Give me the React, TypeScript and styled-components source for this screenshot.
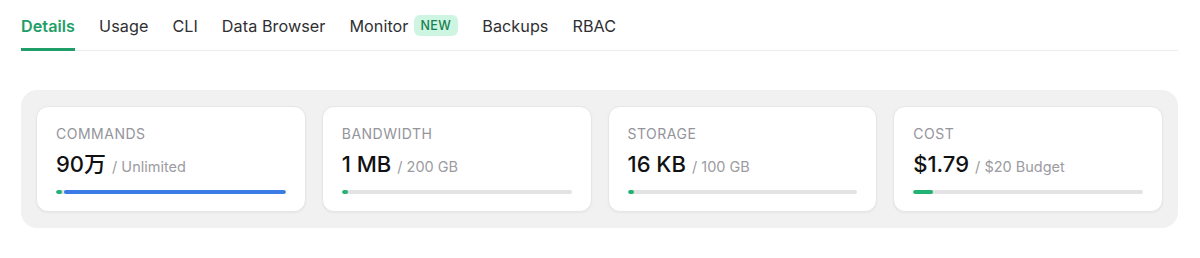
import React from "react"
import styled, { createGlobalStyle } from "styled-components"

const GlobalStyle = createGlobalStyle`
  html, body {
    margin: 0;
    padding: 0;
    background: #ffffff;
    font-family: Inter, "Noto Sans CJK SC", "Noto Sans", sans-serif;
    -webkit-font-smoothing: antialiased;
  }
`

const Page = styled.div`
  width: 1200px;
  height: 258px;
  box-sizing: border-box;
  padding: 0 22px 0 21px;
`

const TabBar = styled.nav`
  display: flex;
  align-items: flex-end;
  gap: 24px;
  border-bottom: 1px solid #ececec;
`

const Tab = styled.div<{ active?: boolean }>`
  display: flex;
  align-items: center;
  gap: 5px;
  height: 51px;
  box-sizing: border-box;
  padding-top: 3px;
  margin-bottom: -1px;
  border-bottom: 3px solid ${(p) => (p.active ? "#1f9e68" : "transparent")};
  font-size: 16.2px;
  line-height: 22px;
  letter-spacing: 0.05px;
  font-weight: ${(p) => (p.active ? 600 : 400)};
  color: ${(p) => (p.active ? "#1f9e68" : "#2f2f33")};
`

const Badge = styled.span`
  display: inline-flex;
  align-items: center;
  height: 21px;
  padding: 0 7px;
  border-radius: 6px;
  background: #cdf5e1;
  color: #1a7f52;
  font-size: 12.5px;
  font-weight: 500;
  letter-spacing: 0.4px;
`

const Panel = styled.section`
  margin-top: 39px;
  padding: 16px 15px;
  border-radius: 16px;
  background: #f1f1f1;
  display: grid;
  grid-template-columns: repeat(4, 1fr);
  gap: 16px;
`

const Card = styled.div`
  background: #ffffff;
  border-radius: 12px;
  border: 1px solid #e6e6e6;
  box-shadow: 0 1px 2px rgba(0, 0, 0, 0.05);
  padding: 17px 19px 17px;
  display: flex;
  flex-direction: column;
`

const Label = styled.div`
  font-size: 14px;
  line-height: 20px;
  letter-spacing: 0.5px;
  color: #94949b;
  text-transform: uppercase;
`

const ValueRow = styled.div`
  margin-top: 6px;
  display: flex;
  align-items: baseline;
  gap: 6px;
`

const Value = styled.span`
  font-size: 22px;
  line-height: 28px;
  font-weight: 500;
  color: #111113;
`

const Limit = styled.span`
  font-size: 14.5px;
  color: #9b9ba1;
`

const Track = styled.div`
  margin-top: 12px;
  height: 4px;
  border-radius: 2px;
  background: #e3e3e6;
  display: flex;
  gap: 2px;
  overflow: hidden;
`

const Fill = styled.div<{ tone: "green" | "blue" }>`
  height: 100%;
  border-radius: 2px;
  background: ${(p) => (p.tone === "green" ? "#22b374" : "#3a7be6")};
`

type Stat = {
  label: string
  value: string
  limit: string
  used: number
  unlimited?: boolean
}

const stats: Stat[] = [
  { label: "Commands", value: "90万", limit: "/ Unlimited", used: 6, unlimited: true },
  { label: "Bandwidth", value: "1 MB", limit: "/ 200 GB", used: 6 },
  { label: "Storage", value: "16 KB", limit: "/ 100 GB", used: 6 },
  { label: "Cost", value: "$1.79", limit: "/ $20 Budget", used: 20 }
]

const tabs = ["Details", "Usage", "CLI", "Data Browser", "Monitor", "Backups", "RBAC"]

export default function App() {
  return (
    <Page>
      <GlobalStyle />
      <TabBar>
        {tabs.map((t) => (
          <Tab key={t} active={t === "Details"}>
            {t}
            {t === "Monitor" && <Badge>NEW</Badge>}
          </Tab>
        ))}
      </TabBar>
      <Panel>
        {stats.map((s) => (
          <Card key={s.label}>
            <Label>{s.label}</Label>
            <ValueRow>
              <Value>{s.value}</Value>
              <Limit>{s.limit}</Limit>
            </ValueRow>
            <Track>
              <Fill tone="green" style={{ width: `${s.used}px` }} />
              {s.unlimited && <Fill tone="blue" style={{ flex: 1 }} />}
            </Track>
          </Card>
        ))}
      </Panel>
    </Page>
  )
}
